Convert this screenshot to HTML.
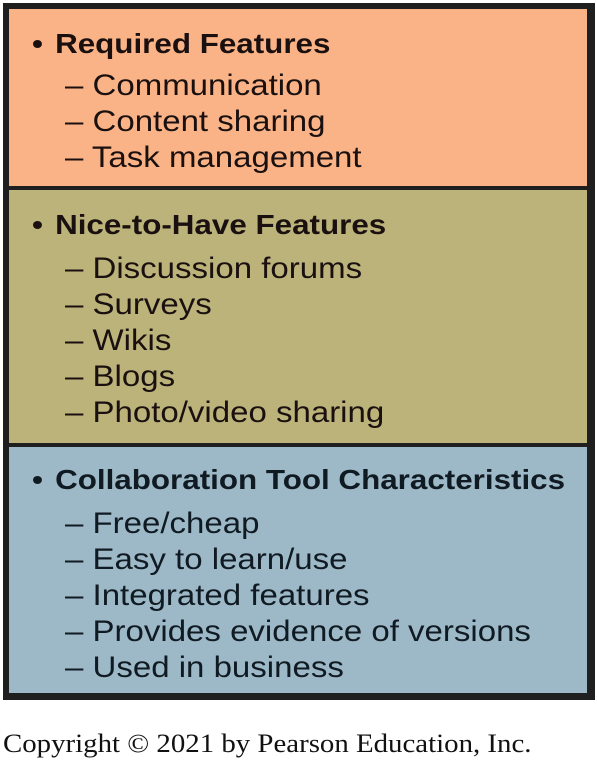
<!DOCTYPE html>
<html><head><style>
body{margin:0;width:597px;height:765px;background:#fff;position:relative;overflow:hidden;font-family:"Liberation Sans",sans-serif;}
.box{position:absolute;left:3px;width:592px;background:#1f1f1f;}
.p{position:absolute;left:9px;width:578px;}
.t{position:absolute;white-space:nowrap;font-size:30px;line-height:36px;color:#1a1010;transform:scaleX(1.1);transform-origin:0 0;margin-top:1px;}
.h{font-weight:bold;left:32px;font-size:28px;transform:scaleX(1.12);}
.h span{margin-right:3px;}
.i{left:65px;}
</style></head><body>
<div class="box" style="top:3px;height:697px;"></div>
<div class="p" style="top:9px;height:177px;background:#f9b386;"></div>
<div class="p" style="top:190px;height:253px;background:#bcb37a;"></div>
<div class="p" style="top:447px;height:246px;background:#9db8c6;"></div>

<div class="t h" style="top:25px"><span>•</span> Required Features</div>
<div class="t i" style="top:67px">– Communication</div>
<div class="t i" style="top:103px">– Content sharing</div>
<div class="t i" style="top:139px">– Task management</div>

<div class="t h" style="top:206px"><span>•</span> Nice-to-Have Features</div>
<div class="t i" style="top:250px">– Discussion forums</div>
<div class="t i" style="top:286px">– Surveys</div>
<div class="t i" style="top:322px">– Wikis</div>
<div class="t i" style="top:358px">– Blogs</div>
<div class="t i" style="top:394px">– Photo/video sharing</div>

<div class="t h" style="top:461px;color:#101a22"><span>•</span> Collaboration Tool Characteristics</div>
<div class="t i" style="top:505px;color:#101a22">– Free/cheap</div>
<div class="t i" style="top:541px;color:#101a22">– Easy to learn/use</div>
<div class="t i" style="top:577px;color:#101a22">– Integrated features</div>
<div class="t i" style="top:613px;color:#101a22">– Provides evidence of versions</div>
<div class="t i" style="top:649px;color:#101a22">– Used in business</div>

<div style="position:absolute;left:3px;top:728px;font-family:'Liberation Serif',serif;font-size:26px;line-height:32px;color:#111;white-space:nowrap;transform:scaleX(1.11);transform-origin:0 0;">Copyright © 2021 by Pearson Education, Inc.</div>
</body></html>
